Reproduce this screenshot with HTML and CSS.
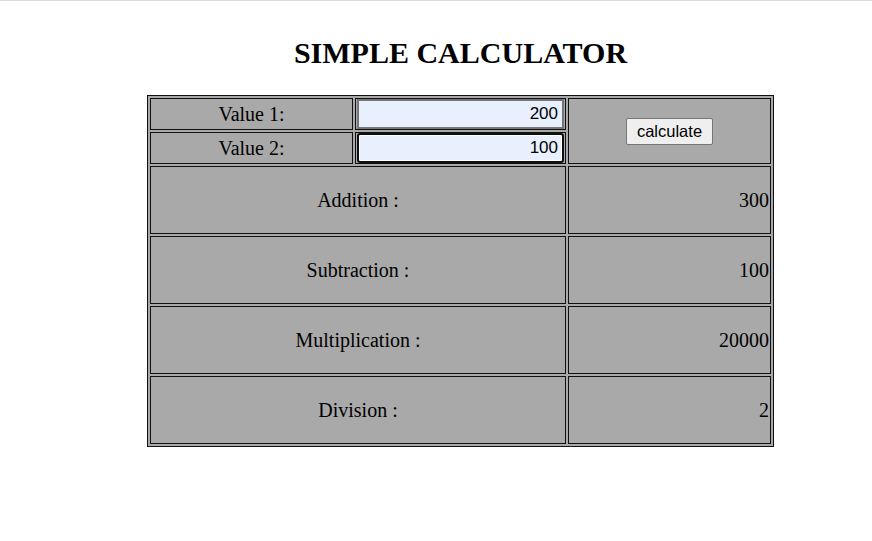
FILE: index.html
```html
<!DOCTYPE html>
<html>
<head>
<meta charset="utf-8">
<title>Simple Calculator</title>
<link rel="stylesheet" href="styles.css">
</head>
<body>
<div class="topline"></div>
<div class="page">
  <h1 class="title">SIMPLE CALCULATOR</h1>
  <table class="calc">
    <tr class="row-in">
      <td class="label c1">Value 1:</td>
      <td class="c2"><input class="num" type="text" value="200"></td>
      <td class="c3 btn-cell" rowspan="2"><button class="calc-btn" type="button">calculate</button></td>
    </tr>
    <tr class="row-in">
      <td class="label c1">Value 2:</td>
      <td class="c2"><input class="num focused" type="text" value="100"></td>
    </tr>
    <tr class="row-out">
      <td class="label" colspan="2">Addition :</td>
      <td class="result">300</td>
    </tr>
    <tr class="row-out">
      <td class="label" colspan="2">Subtraction :</td>
      <td class="result">100</td>
    </tr>
    <tr class="row-out">
      <td class="label" colspan="2">Multiplication :</td>
      <td class="result">20000</td>
    </tr>
    <tr class="row-out">
      <td class="label" colspan="2">Division :</td>
      <td class="result">2</td>
    </tr>
  </table>
</div>
</body>
</html>
```

FILE: styles.css
```css
html, body {
  margin: 0;
  padding: 0;
  overflow: hidden;
  background: #fff;
}
body {
  font-family: "Liberation Serif", "Times New Roman", serif;
  color: #000;
}
.topline {
  height: 1px;
  background: #dcdcdc;
}
.page {
  padding-left: 147px;
}
.title {
  margin: 33px 0 24px -98px;
  text-align: center;
  font-size: 30px;
  font-weight: bold;
  line-height: 37px;
}
.calc {
  width: 627px;
  border: 1px solid #111;
  border-spacing: 2px;
  border-collapse: separate;
  background: #a9a9a9;
  table-layout: fixed;
}
.calc td {
  border: 1px solid #111;
  padding: 0 1px;
  background: #a9a9a9;
  font-size: 20px;
  line-height: 23px;
}
.c1 { width: 199px; }
.c2 { width: 207px; }
.c3 { width: 199px; }
.row-in td { height: 30px; }
.row-out td { height: 66px; }
.label { text-align: center; }
.result { text-align: right; }
.btn-cell { text-align: center; }
.num {
  display: block;
  box-sizing: border-box;
  width: 100%;
  height: 30px;
  margin: 0;
  padding: 1px 4px 1px 2px;
  border: 2px solid #767676;
  border-radius: 0;
  background: #e8f0fe;
  font-family: "Liberation Sans", Arial, sans-serif;
  font-size: 17px;
  color: #000;
  text-align: right;
}
.num.focused {
  border: 2px solid #101010;
  border-radius: 3px;
  box-shadow: inset 0 0 0 1px #fff;
  outline: none;
}
.calc-btn {
  font-family: "Liberation Sans", Arial, sans-serif;
  font-size: 16.5px;
  padding: 1px 10px;
  height: 27px;
  background: #efefef;
  border: 1px solid #767676;
  border-radius: 2px;
  color: #000;
}
```
